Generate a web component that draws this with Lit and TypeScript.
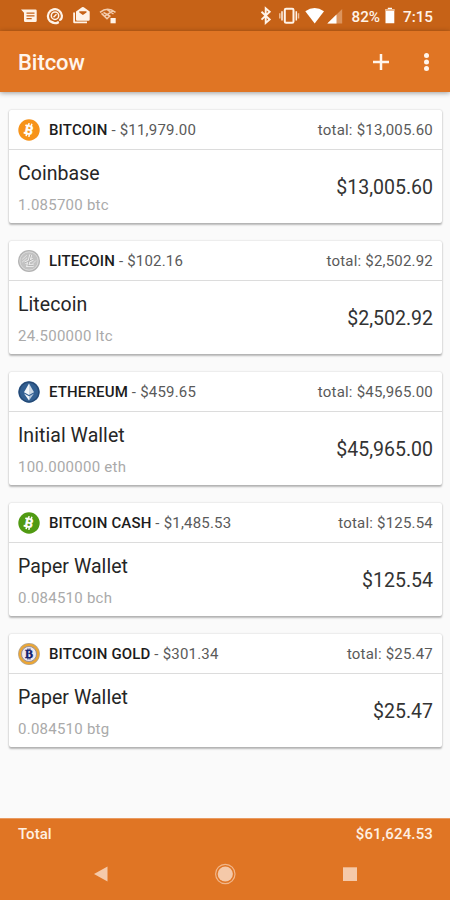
import { LitElement, html, svg, css } from "lit";
import { customElement, property } from "lit/decorators.js";

type CoinKind = "btc" | "ltc" | "eth" | "bch" | "btg";

interface Holding {
  kind: CoinKind;
  coin: string;
  price: string;
  total: string;
  wallet: string;
  amount: string;
}

const holdings: Holding[] = [
  { kind: "btc", coin: "BITCOIN", price: "$11,979.00", total: "$13,005.60", wallet: "Coinbase", amount: "1.085700 btc" },
  { kind: "ltc", coin: "LITECOIN", price: "$102.16", total: "$2,502.92", wallet: "Litecoin", amount: "24.500000 ltc" },
  { kind: "eth", coin: "ETHEREUM", price: "$459.65", total: "$45,965.00", wallet: "Initial Wallet", amount: "100.000000 eth" },
  { kind: "bch", coin: "BITCOIN CASH", price: "$1,485.53", total: "$125.54", wallet: "Paper Wallet", amount: "0.084510 bch" },
  { kind: "btg", coin: "BITCOIN GOLD", price: "$301.34", total: "$25.47", wallet: "Paper Wallet", amount: "0.084510 btg" },
];

const bitcoinMark = (background: string) => svg`
  <circle cx="11" cy="11" r="10.7" fill=${background}></circle>
  <g transform="rotate(13 11 11)" fill="#fff">
    <text x="11.2" y="15.6" text-anchor="middle" font-family="Roboto, sans-serif" font-weight="700" font-size="13" stroke="#fff" stroke-width=".3">B</text>
    <path d="M8.800 4.300h1.500v2.500H8.800zM11.600 4.300h1.500v2.500h-1.500zM8.800 15.200h1.500v2.500H8.800zM11.600 15.200h1.500v2.500h-1.500zM6.300 6.400h3v1.700h-3zM6.300 13.900h3v1.700h-3z"></path>
  </g>`;

const coinArt = {
  btc: bitcoinMark("#f7931a"),
  bch: bitcoinMark("#509a12"),
  ltc: svg`
    <circle cx="11" cy="11" r="11" fill="#b3b3b3"></circle>
    <circle cx="11" cy="11" r="9.200" fill="#c2c2c2" stroke="#e4e4e4" stroke-width=".8"></circle>
    <path d="M12.800 4.600 9.800 15.600h5.800M7 12.800l8-3.400" fill="none" stroke="#eee" stroke-width="2.800"></path>
    <path d="M12.800 4.600 9.800 15.600h5.800M7 12.800l8-3.400" fill="none" stroke="#b0b0b0" stroke-width="1"></path>
    <path d="M4.200 9.300 8.800 5.200M4 12.300l5-4.500M14.500 14l3.500-3.500" fill="none" stroke="#ebebeb" stroke-width=".8"></path>`,
  eth: svg`
    <circle cx="11" cy="11" r="10.7" fill="#315f92"></circle>
    <circle cx="11" cy="11" r="9.8" fill="none" stroke="#254873" stroke-width="1.2"></circle>
    <path d="M11 2.500 6 11.200 11 14z" fill="#f3f7fb"></path>
    <path d="M11 2.500l5 8.700L11 14z" fill="#cbd8e5"></path>
    <path d="M6 12.400 11 15.200v4.400z" fill="#f3f7fb"></path>
    <path d="M16 12.400 11 15.200v4.400z" fill="#b6c8dc"></path>`,
  btg: svg`
    <circle cx="11" cy="11" r="10.9" fill="#b7a68f"></circle>
    <circle cx="11" cy="11" r="9.2" fill="none" stroke="#eba634" stroke-width="2.2"></circle>
    <circle cx="11" cy="11" r="7.5" fill="#eee9f0" stroke="#8a7b83" stroke-width=".7"></circle>
    <text x="11.200" y="15" text-anchor="middle" font-family="Liberation Serif, serif" font-weight="700" font-size="12" fill="#12206f" stroke="#12206f" stroke-width=".4">B</text>
    <path d="M9.400 5.600h1.100v2H9.400zM11.400 5.600h1.100v2h-1.100zM9.400 14.600h1.100v2H9.400zM11.400 14.600h1.100v2h-1.100z" fill="#12206f"></path>`,
};

@customElement("wallet-card")
class WalletCard extends LitElement {
  @property({ attribute: false }) holding!: Holding;

  static styles = css`
    :host {
      display: block;
      box-sizing: border-box;
      height: 113px;
      background: #fff;
      border-radius: 2px;
      box-shadow: 0 0 2px rgba(0, 0, 0, 0.16), 0 1.5px 2px rgba(0, 0, 0, 0.26);
    }
    .head {
      display: flex;
      align-items: center;
      box-sizing: border-box;
      height: 40px;
      padding: 0 9px 0 9px;
      border-bottom: 1px solid #dcdcdc;
      font-size: 15px;
      letter-spacing: 0.2px;
      color: #5a5a5a;
    }
    .coin {
      width: 22px;
      height: 22px;
      margin-right: 9px;
    }
    .name {
      font-weight: 500;
      letter-spacing: 0.15px;
      color: #1c1c1c;
    }
    .price {
      flex: 1;
      white-space: pre;
    }
    .body {
      display: flex;
      align-items: center;
      justify-content: space-between;
      height: 73px;
      padding: 0 9px;
    }
    .wallet {
      margin-top: 4px;
      font-size: 19.5px;
      line-height: 24px;
      color: #262626;
      letter-spacing: 0.06px;
    }
    .amount {
      margin-top: 9px;
      font-size: 15px;
      line-height: 20px;
      letter-spacing: 0.25px;
      color: #aaa;
    }
    .value {
      font-size: 19.5px;
      color: #333;
      padding-top: 2px;
    }
  `;

  render() {
    const h = this.holding;
    return html`
      <div class="head">
        <svg class="coin" viewBox="0 0 22 22">${coinArt[h.kind]}</svg>
        <span class="name">${h.coin}</span>
        <span class="price"> - ${h.price}</span>
        <span>total: ${h.total}</span>
      </div>
      <div class="body">
        <div>
          <div class="wallet">${h.wallet}</div>
          <div class="amount">${h.amount}</div>
        </div>
        <div class="value">${h.total}</div>
      </div>
    `;
  }
}

@customElement("app-root")
class AppRoot extends LitElement {
  static styles = css`
    :host {
      display: flex;
      flex-direction: column;
      height: 900px;
      overflow: hidden;
      background: #fafafa;
      font-family: Roboto, sans-serif;
    }
    svg {
      display: block;
    }
    .status {
      height: 31px;
      background: #c66217;
      color: #fff3e8;
    }
    .bar {
      display: flex;
      align-items: center;
      height: 61px;
      padding: 0 13px 0 18px;
      background: #e07524;
      color: #fff5ec;
      box-shadow: 0 1px 5px rgba(0, 0, 0, 0.38);
    }
    .title {
      flex: 1;
      font-size: 22px;
      font-weight: 500;
      letter-spacing: -0.05px;
      padding-top: 1px;
    }
    .plus {
      width: 24px;
      height: 24px;
      margin-right: 22px;
    }
    .more {
      width: 22px;
      height: 24px;
    }
    .list {
      flex: 1;
      display: flex;
      flex-direction: column;
      gap: 18px;
      padding: 18px 8px 0 9px;
    }
    .total {
      display: flex;
      justify-content: space-between;
      height: 31px;
      box-sizing: border-box;
      padding: 6px 17px 0 18px;
      background: #e07524;
      color: #fff0e2;
      font-size: 15px;
      line-height: 19px;
      font-weight: 500;
      letter-spacing: 0.15px;
      border-top: 1px solid #e99a60;
    }
    .label {
      letter-spacing: 0;
    }
    .nav {
      height: 51px;
      background: #e07524;
    }
  `;

  render() {
    return html`
      <div class="status">
        <svg width="450" height="31" viewBox="0 0 450 31" fill="currentColor">
          <path fill-rule="evenodd" d="M21 9.500h14.500q1.200 0 1.200 1.200v10q0 1.300-1.300 1.300H25.200q-1.200 0-1.200-1.200V12.800zM26.500 12.500v1.300h8v-1.300zM26.500 15.300v1.300h8v-1.300zM26.500 18v1.300h5.200V18z"></path>
          <g fill="none" stroke="currentColor">
            <path d="M58.500 22.200a7 7 0 1 1 3.400-6.500c0 2.800-1.200 4.200-2.700 4.200" stroke-width="2.200"></path>
            <circle cx="55" cy="15.700" r="3.700" stroke-width="1.500"></circle>
            <path d="M53.500 17.300l3-3" stroke-width="1.500"></path>
            <path d="M50.500 21l4.500 2 4-1" stroke-width="1.500"></path>
          </g>
          <path d="M73.200 12.500h1.800v9h12v1.800H74.500q-1.300 0-1.300-1.300z"></path>
          <path fill-rule="evenodd" d="M76 11.500l6-4.200q.9-.5 1.800 0l5.900 4.200v8q0 1.200-1.200 1.200H77.200Q76 20.700 76 19.500zM79.300 11.300v1.200l3.600 2.500 3.600-2.500v-1.200z"></path>
          <g fill="none" stroke="#f3ccad" stroke-width="1.500">
            <path d="M100 12.300q7.500-6 15.500 0M101.500 13.400l5.500 5.300 3-3M103.500 12.500l7 4M105 15.800l8-5M107.500 10l6 4"></path>
          </g>
          <path d="M110.500 18h5.200v5.300h-5.200z"></path>
          <path d="M261.500 11.700l8.200 7.800-4 3.500V8.300l4 3.500-8.200 7.800" fill="none" stroke="currentColor" stroke-width="1.900"></path>
          <g fill="none" stroke="currentColor">
            <rect x="284.800" y="8.800" width="8.700" height="14" rx="1.300" stroke-width="2"></rect>
            <path d="M282 11.300v9.200M296.300 11.300v9.200" stroke-width="1.500"></path>
            <path d="M279.800 13.200v5.200M298.500 13.200v5.200" stroke="#efbd93" stroke-width="1.500"></path>
          </g>
          <path fill="#fff" d="M305.300 11.200q9.300-6.400 18.700 0L314.700 23.400z"></path>
          <path fill="#dc945d" d="M342.200 9v14.400h-14.900z"></path>
          <path fill="#fff" d="M336.500 14.500v8.900h-9.200z"></path>
          <text x="351.500" y="21.500" font-size="14.800" font-weight="500" textLength="28.500" lengthAdjust="spacingAndGlyphs">82%</text>
          <path fill="#fff" d="M385.500 9h2.300V7.800h4.200V9h2.300v14.200h-8.800z"></path>
          <path fill="#edb98e" d="M385.500 9h8.800v2h-8.800z"></path>
          <text x="403" y="21.500" font-size="15.500" font-weight="500" textLength="30" lengthAdjust="spacingAndGlyphs">7:15</text>
        </svg>
      </div>
      <div class="bar">
        <div class="title">Bitcow</div>
        <svg class="plus" viewBox="0 0 24 24"><path d="M12 4v16M4 12h16" fill="none" stroke="currentColor" stroke-width="2.500"></path></svg>
        <svg class="more" viewBox="0 0 22 24" fill="currentColor">
          <circle cx="11.500" cy="5.500" r="2.500"></circle><circle cx="11.500" cy="12" r="2.500"></circle><circle cx="11.500" cy="18.500" r="2.500"></circle>
        </svg>
      </div>
      <div class="list">
        ${holdings.map((h) => html`<wallet-card .holding=${h}></wallet-card>`)}
      </div>
      <div class="total"><span class="label">Total</span><span>$61,624.53</span></div>
      <div class="nav">
        <svg width="450" height="51" viewBox="0 0 450 51" fill="#f5c9a9">
          <path d="M94 25l13.500-7.500v15z"></path>
          <circle cx="225.300" cy="25" r="7.600"></circle>
          <circle cx="225.300" cy="25" r="9.700" fill="none" stroke="#f1b68a" stroke-width="1.200"></circle>
          <path d="M343 18.300h14v13.700h-14z"></path>
        </svg>
      </div>
    `;
  }
}
